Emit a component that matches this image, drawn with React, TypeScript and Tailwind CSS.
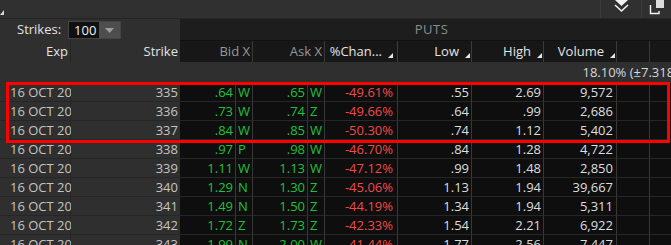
import React from "react";

type Row = {
  strike: string;
  bid: string;
  bidX: string;
  ask: string;
  askX: string;
  chg: string;
  low: string;
  high: string;
  vol: string;
};

const rows: Row[] = [
  { strike: "335", bid: ".64", bidX: "W", ask: ".65", askX: "W", chg: "-49.61%", low: ".55", high: "2.69", vol: "9,572" },
  { strike: "336", bid: ".73", bidX: "W", ask: ".74", askX: "Z", chg: "-49.66%", low: ".64", high: ".99", vol: "2,686" },
  { strike: "337", bid: ".84", bidX: "W", ask: ".85", askX: "W", chg: "-50.30%", low: ".74", high: "1.12", vol: "5,402" },
  { strike: "338", bid: ".97", bidX: "P", ask: ".98", askX: "W", chg: "-46.70%", low: ".84", high: "1.28", vol: "4,722" },
  { strike: "339", bid: "1.11", bidX: "W", ask: "1.13", askX: "W", chg: "-47.12%", low: ".99", high: "1.48", vol: "2,850" },
  { strike: "340", bid: "1.29", bidX: "N", ask: "1.30", askX: "Z", chg: "-45.06%", low: "1.13", high: "1.94", vol: "39,667" },
  { strike: "341", bid: "1.49", bidX: "N", ask: "1.50", askX: "Z", chg: "-44.19%", low: "1.34", high: "1.94", vol: "5,311" },
  { strike: "342", bid: "1.72", bidX: "Z", ask: "1.73", askX: "Z", chg: "-42.33%", low: "1.54", high: "2.21", vol: "6,922" },
  { strike: "343", bid: "1.99", bidX: "N", ask: "2.00", askX: "W", chg: "-41.44%", low: "1.77", high: "2.56", vol: "7,447" },
];

const cols = "grid grid-cols-[71px_109px_56px_17px_55px_17px_73px_74px_72px_73px_33px_21px]";

function SortMark() {
  return (
    <svg width="5" height="5" viewBox="0 0 5 5" className="ml-[6px] mb-[4px] self-end shrink-0">
      <polygon points="5,0 5,5 0,5" fill="#e8e8e8" />
    </svg>
  );
}

function DataRow({ r }: { r: Row }) {
  const cell = "h-[19px] leading-[19px] border-b border-[#262626] whitespace-nowrap";
  const dark = `${cell} bg-[#0e0e0e] border-r border-r-[#383838]`;
  return (
    <div className={cols}>
      <div className={`${cell} bg-[#2f2f2f] border-r border-r-[#262626] pl-[10px] text-[#c4c4c4]`}>16 OCT 20</div>
      <div className={`${cell} bg-[#2f2f2f] text-right pr-[2px] text-[#c4c4c4]`}>{r.strike}</div>
      <div className={`${dark} text-right pr-[2px] text-[#1fc23a]`}>{r.bid}</div>
      <div className={`${dark} pl-[2px] text-[#1fc23a]`}>{r.bidX}</div>
      <div className={`${dark} text-right pr-[2px] text-[#1fc23a]`}>{r.ask}</div>
      <div className={`${dark} pl-[2px] text-[#1fc23a]`}>{r.askX}</div>
      <div className={`${dark} text-right pr-[4px] text-[#f04a4a]`}>{r.chg}</div>
      <div className={`${dark} text-right pr-[2px] text-[#dedede]`}>{r.low}</div>
      <div className={`${dark} text-right pr-[2px] text-[#dedede]`}>{r.high}</div>
      <div className={`${dark} text-right pr-[3px] text-[#dedede]`}>{r.vol}</div>
      <div className={dark}></div>
      <div className={`${cell} bg-[#0e0e0e]`}></div>
    </div>
  );
}

export default function App() {
  return (
    <div className="w-[671px] h-[245px] overflow-hidden bg-[#2f2f2f] text-[13px] font-['Open_Sans',sans-serif]">
      {/* toolbar */}
      <div className="h-[19px] flex bg-[#303030] border-b border-[#242424]">
        <div className="w-[600px] flex items-start">
          <svg width="4" height="5" viewBox="0 0 4 5" className="mt-[10px]">
            <polygon points="4,0 4,5 0,5" fill="#d8d8d8" />
          </svg>
        </div>
        <div className="w-[41px] border-l border-[#3c3c3c] flex justify-center">
          <svg width="15" height="13" viewBox="0 0 15 13">
            <polygon points="1,0 14,0 7.5,6" fill="#f2f2f2" />
            <polyline points="1,5 7.5,11 14,5" fill="none" stroke="#f2f2f2" strokeWidth="1.6" />
          </svg>
        </div>
        <div className="flex-1 border-l border-[#3c3c3c] flex justify-center">
          <svg width="16" height="15" viewBox="0 0 16 15">
            <polyline points="1.5,5 1.5,13.5 10,13.5 10,11" fill="none" stroke="#f2f2f2" strokeWidth="1.4" />
            <rect x="7" y="0" width="8" height="8" fill="#dcdcdc" />
          </svg>
        </div>
      </div>

      {/* strikes / puts */}
      <div className="h-[22px] flex">
        <div className="w-[180px] flex items-center pl-[17px] gap-[7px] text-[#e2e2e2]">
          <span>Strikes:</span>
          <div className="h-[18px] w-[53px] flex bg-[#101010] border border-[#444]">
            <span className="flex-1 pl-[5px] leading-[16px] text-[#f0f0f0]">100</span>
            <div className="w-[21px] bg-[#4e4e4e] flex items-center justify-center">
              <svg width="9" height="5" viewBox="0 0 9 5">
                <polygon points="0,0 9,0 4.5,5" fill="#9c9c9c" />
              </svg>
            </div>
          </div>
        </div>
        <div className="flex-1 bg-[#1d1d1d] border-b border-[#111] flex items-center justify-center pl-[12px] text-[#8c8c8c] tracking-[0.5px]">
          PUTS
        </div>
      </div>

      {/* column headers */}
      <div className="grid grid-cols-[71px_109px_73px_72px_73px_74px_72px_73px_33px_21px] h-[21px] leading-[21px] text-[#e4e4e4] whitespace-nowrap">
        <div className="text-right pr-[2px] border-r border-[#262626]">Exp</div>
        <div className="text-right pr-[2px]">Strike</div>
        <div className="bg-[#171717] border-r border-[#3a3a3a] text-right pr-[2px] text-[#979797]">Bid X</div>
        <div className="bg-[#171717] border-r border-[#3a3a3a] text-right pr-[2px] text-[#979797]">Ask X</div>
        <div className="bg-[#171717] border-r border-[#3a3a3a] flex justify-end pr-[4px]">
          <span>%Chan...</span>
          <SortMark />
        </div>
        <div className="bg-[#171717] border-r border-[#3a3a3a] flex justify-end pr-[1px]">
          <span>Low</span>
          <SortMark />
        </div>
        <div className="bg-[#171717] border-r border-[#3a3a3a] flex justify-end pr-[1px]">
          <span>High</span>
          <SortMark />
        </div>
        <div className="bg-[#171717] border-r border-[#3a3a3a] flex justify-end pr-[1px]">
          <span>Volume</span>
          <SortMark />
        </div>
        <div className="bg-[#171717] border-r border-[#3a3a3a]"></div>
        <div className="bg-[#171717]"></div>
      </div>

      {/* stats row */}
      <div className="h-[21px] leading-[21px] flex justify-end bg-[#2f2f2f] text-[#d8d8d8] whitespace-nowrap">
        <span className="-mr-[7px]">18.10% (±7.318)</span>
      </div>

      {/* data */}
      <div className="relative">
        {rows.map((r) => (
          <DataRow key={r.strike} r={r} />
        ))}
        <div className="absolute left-[6px] top-[-1px] w-[664px] h-[61px] border-[3px] border-[#ff0000] pointer-events-none"></div>
      </div>
    </div>
  );
}
